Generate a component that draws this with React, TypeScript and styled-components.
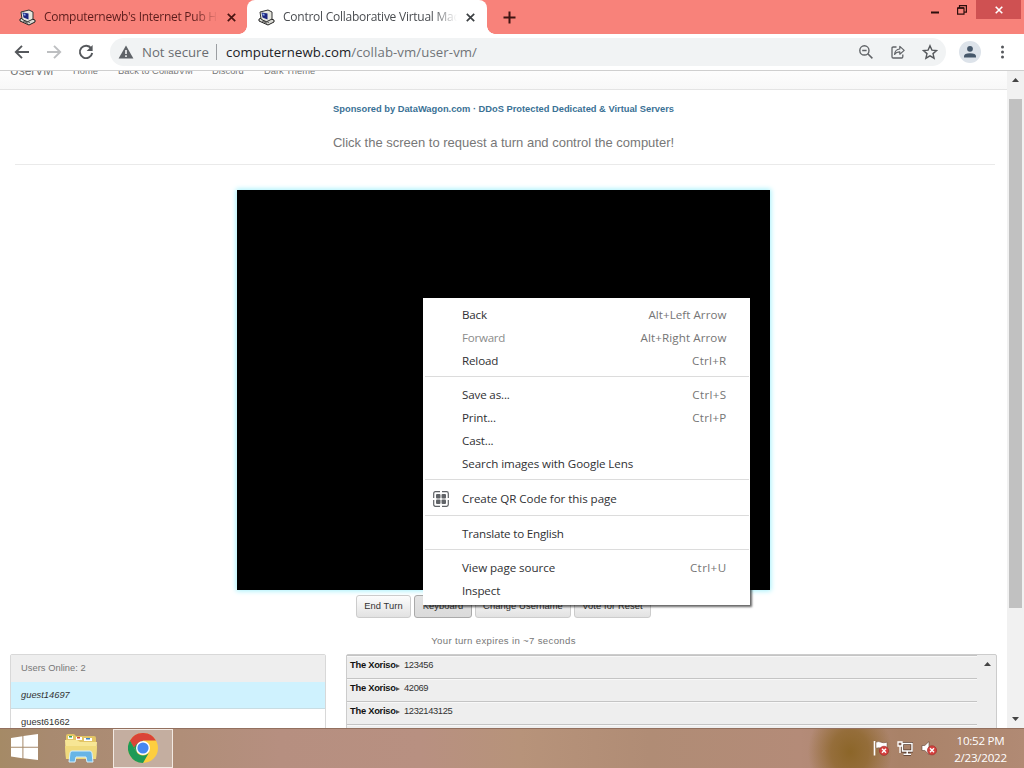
import React from 'react';
import styled, { createGlobalStyle } from 'styled-components';

const Global = createGlobalStyle`
  * { box-sizing: border-box; }
  body { margin: 0; overflow: hidden; background: #fff; }
  svg { display: block; flex: none; }
`;

const UI = `'Open Sans', 'Noto Sans', sans-serif`;
const WEB = `'Liberation Sans', Arial, sans-serif`;

const Screen = styled.div`
  position: relative;
  width: 1024px;
  height: 768px;
  display: flex;
  flex-direction: column;
  overflow: hidden;
  font-family: ${UI};
`;

const TabStrip = styled.div`
  display: flex;
  height: 34px;
  background: #f8827a;
`;
const Tab = styled.div<{ $active?: boolean }>`
  position: relative;
  display: flex;
  align-items: center;
  width: ${p => (p.$active ? 240 : 247)}px;
  padding-left: ${p => (p.$active ? 11 : 19)}px;
  background: ${p => (p.$active ? '#fff' : 'transparent')};
  color: ${p => (p.$active ? '#4a4d51' : '#5c1d1c')};
  border-radius: 8px 8px 0 0;
  &::before, &::after {
    content: '';
    display: ${p => (p.$active ? 'block' : 'none')};
    position: absolute;
    bottom: 0;
    width: 8px;
    height: 8px;
  }
  &::before { left: -8px; background: radial-gradient(circle at 0 0, #f8827a 7.5px, #fff 8px); }
  &::after { right: -8px; background: radial-gradient(circle at 100% 0, #f8827a 7.5px, #fff 8px); }
`;
const TabTitle = styled.span<{ $ls: number }>`
  width: 174px;
  margin: 0 9px 0 8px;
  overflow: hidden;
  white-space: nowrap;
  font-size: 12px;
  line-height: 18px;
  letter-spacing: ${p => p.$ls}px;
  mask-image: linear-gradient(90deg, #000 150px, transparent 174px);
`;
const NewTab = styled.div`
  display: flex;
  align-items: center;
  padding-left: 15.5px;
  flex: 1;
`;
const WindowButtons = styled.div`
  display: flex;
  align-items: flex-start;
`;
const WindowButton = styled.div<{ $w: number; $close?: boolean }>`
  width: ${p => p.$w}px;
  height: 19px;
  display: flex;
  align-items: center;
  justify-content: center;
  background: ${p => (p.$close ? '#cf5152' : 'transparent')};
  margin-right: ${p => (p.$close ? 3 : 0)}px;
`;

const Toolbar = styled.div`
  display: flex;
  align-items: center;
  height: 37px;
  padding-left: 14px;
  background: #fff;
  border-bottom: 1px solid #cfcfcf;
`;
const NavButtons = styled.div`
  display: flex;
  gap: 16px;
  width: 96px;
`;
const Omnibox = styled.div`
  display: flex;
  align-items: center;
  width: 836px;
  height: 28px;
  padding-left: 8px;
  border-radius: 14px;
  background: #f1f3f4;
  font-size: 13.2px;
  line-height: 20px;
  white-space: nowrap;
`;
const Security = styled.span`
  margin-left: 8px;
  width: 74px;
  color: #6a6d71;
`;
const Divider = styled.i`
  width: 1px;
  height: 16px;
  margin-right: 9px;
  background: #9b9ea2;
`;
const Url = styled.span`
  flex: 1;
  letter-spacing: 0.09px;
  color: #707378;
  b { font-weight: 400; color: #202124; }
`;
const OmniIcons = styled.div`
  display: flex;
  gap: 16px;
  margin-right: 8px;
`;
const Avatar = styled.div`
  display: flex;
  align-items: center;
  justify-content: center;
  width: 22px;
  height: 22px;
  margin: 0 13px 0 13px;
  border-radius: 50%;
  background: #dde3ea;
`;

const Viewport = styled.div`
  display: flex;
  height: 657px;
  overflow: hidden;
`;
const Page = styled.main`
  width: 1007px;
  display: flex;
  flex-direction: column;
  font-family: ${WEB};
  background: #fff;
  > * { flex-shrink: 0; }
`;
const SiteNav = styled.nav`
  display: flex;
  align-items: flex-start;
  height: 19px;
  padding-left: 10px;
  border-bottom: 1px solid #e4e4e4;
  background: linear-gradient(#fdfdfd, #f8f8f8);
  overflow: hidden;
`;
const NavLink = styled.span<{ $w: number; $brand?: boolean; $ls?: number }>`
  width: ${p => p.$w}px;
  flex: none;
  margin-top: -6px;
  white-space: nowrap;
  font-size: ${p => (p.$brand ? 12 : 9.33)}px;
  line-height: 13px;
  letter-spacing: ${p => p.$ls ?? 0}px;
  color: #777;
`;
const Sponsor = styled.a`
  margin-top: 12px;
  height: 14px;
  text-align: center;
  font-size: 9.33px;
  line-height: 14px;
  font-weight: 700;
  letter-spacing: -0.01px;
  white-space: nowrap;
  color: #3a7195;
`;
const Lead = styled.p`
  margin: 18px 12px 0 15px;
  padding-right: 3px;
  height: 31px;
  text-align: center;
  font-size: 13px;
  line-height: 18px;
  letter-spacing: -0.01px;
  color: #777;
  border-bottom: 1px solid #eaeaea;
`;
const Display = styled.div`
  width: 533px;
  height: 400px;
  margin: 25px 0 0 237px;
  background: #000;
  box-shadow: 0 0 5px 1px #a5f0fb;
`;
const Buttons = styled.div`
  display: flex;
  gap: 3px;
  margin: 5px 0 0 356px;
  height: 23px;
`;
const Button = styled.button<{ $w: number; $pressed?: boolean }>`
  width: ${p => p.$w}px;
  height: 23px;
  padding: 0 0 1px;
  border: 1px solid ${p => (p.$pressed ? '#aaa' : '#ccc')};
  border-radius: 3px;
  background: ${p => (p.$pressed ? 'linear-gradient(#e4e4e4, #dadada)' : 'linear-gradient(#fdfdfd, #e2e2e2)')};
  font: 9.33px ${WEB};
  letter-spacing: 0.1px;
  color: #333;
  white-space: nowrap;
`;
const TurnStatus = styled.p`
  margin: 16px 0 0;
  height: 14px;
  text-align: center;
  font-size: 9.6px;
  line-height: 14px;
  letter-spacing: 0.33px;
  color: #777;
`;
const Columns = styled.div`
  display: flex;
  gap: 20px;
  margin: 6px 10px 0;
  height: 90px;
`;
const UserList = styled.div`
  width: 316px;
  flex: none;
  border: 1px solid #d8d8d8;
  border-radius: 2px 2px 0 0;
`;
const UserRow = styled.div<{ $kind?: 'head' | 'active' }>`
  height: 27px;
  padding-left: 10px;
  font-size: 9.33px;
  line-height: 26px;
  letter-spacing: ${p => (p.$kind === 'head' ? 0.03 : 0)}px;
  color: ${p => (p.$kind === 'head' ? '#777' : '#333')};
  font-style: ${p => (p.$kind === 'active' ? 'italic' : 'normal')};
  background: ${p => (p.$kind === 'head' ? '#eee' : p.$kind === 'active' ? '#cff2fe' : '#fff')};
  border-bottom: ${p => (p.$kind === 'active' ? '1px solid #c9dde3' : '0')};
`;
const Chat = styled.div`
  display: flex;
  width: 651px;
  border: 1px solid #ccc;
  border-radius: 2px 2px 0 0;
  background: #eee;
`;
const Messages = styled.div`
  width: 630px;
`;
const Message = styled.div`
  display: flex;
  height: 23px;
  padding-left: 3px;
  border-top: 1px solid #c4c4c4;
  box-shadow: inset 0 1px #f8f8f8;
  font-size: 9.33px;
  line-height: 19px;
  letter-spacing: -0.35px;
  color: #333;
  white-space: nowrap;
`;
const Author = styled.b`
  width: 46px;
  letter-spacing: -0.25px;
  color: #111;
`;
const Marker = styled.span`
  display: flex;
  align-items: center;
  width: 8px;
  height: 19px;
`;
const ChatScroll = styled.div`
  flex: 1;
  padding: 7px 0 0 7px;
`;
const ScrollBar = styled.div`
  display: flex;
  flex-direction: column;
  align-items: center;
  justify-content: space-between;
  width: 17px;
  padding: 7px 0 7px;
  background: #f1f1f1;
`;
const Thumb = styled.div`
  width: 13px;
  height: 509px;
  margin: 17px 0 auto;
  background: #c1c1c1;
`;

const Menu = styled.div`
  position: absolute;
  left: 423px;
  top: 298px;
  width: 327px;
  height: 307px;
  padding-top: 5px;
  background: #fff;
  box-shadow: 2px 2px 2px rgba(0, 0, 0, 0.6);
`;
const MenuRow = styled.div<{ $disabled?: boolean }>`
  display: flex;
  align-items: center;
  height: 23px;
  padding: 0 23.5px 0 10px;
  font-size: 11.6px;
  line-height: 23px;
  white-space: nowrap;
  color: ${p => (p.$disabled ? '#8b8b8b' : '#303134')};
`;
const MenuIcon = styled.span`
  width: 29px;
`;
const MenuLabel = styled.span<{ $ls: number }>`
  flex: 1;
  letter-spacing: ${p => p.$ls}px;
`;
const Shortcut = styled.span<{ $ls: number }>`
  letter-spacing: ${p => p.$ls}px;
  color: #757575;
`;
const MenuLine = styled.div<{ $before: number; $after: number }>`
  height: 1px;
  margin: ${p => p.$before}px 1px ${p => p.$after}px 2px;
  background: #dcdcdc;
`;

const Taskbar = styled.div`
  display: flex;
  height: 40px;
  box-shadow: inset 0 1px #93705f;
  background:
    radial-gradient(ellipse 42px 48px at 850px 24px, rgba(138, 100, 37, 0.95) 0%, rgba(140, 101, 40, 0.75) 45%, rgba(160, 116, 80, 0) 100%),
    linear-gradient(90deg, #a58a66 0, #a88a70 50px, #b08e78 180px, #b68f80 280px, #b89081 420px, #b7937a 520px, #b08c75 650px, #b48b78 800px, #a98268 900px, #b18a74 1024px);
`;
const TaskItem = styled.div<{ $w: number; $active?: boolean }>`
  display: flex;
  align-items: center;
  justify-content: center;
  width: ${p => p.$w}px;
  height: 39px;
  margin-top: ${p => (p.$active ? 1 : 0)}px;
  padding-bottom: ${p => (p.$active ? 1 : 0)}px;
  border: ${p => (p.$active ? '1px solid #f2e9e2' : '0')};
  background: ${p => (p.$active ? '#c4aea0' : 'transparent')};
`;
const Tray = styled.div`
  display: flex;
  gap: 8px;
  align-items: center;
  margin-left: auto;
`;
const Clock = styled.div`
  width: 87px;
  padding-top: 4px;
  text-align: center;
  font-size: 11.6px;
  line-height: 17px;
  letter-spacing: -0.25px;
  color: #fff;
`;

const PcIcon = () => (
  <svg width="17" height="17" viewBox="0 0 17 17">
    <path d="M1 10l6-2 9 3v2l-6 3-9-4z" fill="#d8d8d2" stroke="#222" strokeWidth="1" />
    <path d="M2 3l8-2 4 2v7l-6 3-5-3z" fill="#e6e6de" stroke="#333" strokeWidth="1" />
    <path d="M3.5 3.5l6 1v6l-5-2z" fill="#1c2580" />
    <path d="M4.5 4.5l2 .3v2l-2-.5z" fill="#8fb0f0" />
    <path d="M4 12l5 2.4M6 11.6l5 2" stroke="#444" strokeWidth=".8" />
  </svg>
);
const Cross = ({ size = 9, color = '#3c4043', w = 1.7 }: { size?: number; color?: string; w?: number }) => (
  <svg width={size} height={size} viewBox="0 0 9 9">
    <path d="M.8.8l7.4 7.4M8.2.8L.8 8.2" stroke={color} strokeWidth={w} />
  </svg>
);
const Arrow = ({ flip, color }: { flip?: boolean; color: string }) => (
  <svg width="16" height="16" viewBox="0 0 16 16">
    <path
      d={flip ? 'M1 8h13M8 1.8L14.2 8 8 14.2' : 'M15 8H2M8 1.8L1.8 8 8 14.2'}
      fill="none"
      stroke={color}
      strokeWidth="1.9"
    />
  </svg>
);
const Triangle = ({ down }: { down?: boolean }) => (
  <svg width="7" height="4" viewBox="0 0 7 4">
    <path d={down ? 'M0 0h7L3.5 4z' : 'M0 4h7L3.5 0z'} fill="#444" />
  </svg>
);
const QrIcon = () => (
  <svg width="16" height="16" viewBox="0 0 16 16">
    <path
      d="M.7 7V2.4Q.7.7 2.4.7H7M9 .7h4.6q1.700 0 1.700 1.700V7M15.3 9v4.6q0 1.700-1.700 1.700H9M7 15.3H2.4q-1.700 0-1.700-1.700V9"
      fill="none"
      stroke="#606367"
      strokeWidth="1.2"
    />
    <g fill="#606367">
      <rect x="3" y="3" width="4.500" height="4.500" rx="1" />
      <rect x="8.500" y="3" width="4.500" height="4.500" rx="1" />
      <rect x="3" y="8.500" width="4.500" height="4.500" rx="1" />
      <rect x="8.500" y="8.500" width="4.500" height="4.500" rx="1" />
    </g>
  </svg>
);
const RedBadge = ({ x, y }: { x: number; y: number }) => (
  <g>
    <circle cx={x} cy={y} r="4.6" fill="#d5413f" stroke="#9a2c28" strokeWidth=".6" />
    <path d={`M${x - 2} ${y - 2}l4 4m0-4l-4 4`} stroke="#fff" strokeWidth="1.4" />
  </g>
);

type Item = { label: string; ls: number; keys?: string; kls?: number; disabled?: boolean; qr?: boolean };
const groups: { before: number; after: number; items: Item[] }[] = [
  {
    before: 0, after: 0,
    items: [
      { label: 'Back', ls: -0.2, keys: 'Alt+Left Arrow', kls: 0.05 },
      { label: 'Forward', ls: -0.25, keys: 'Alt+Right Arrow', kls: 0.1, disabled: true },
      { label: 'Reload', ls: -0.15, keys: 'Ctrl+R', kls: 0.25 },
    ],
  },
  {
    before: 4, after: 6,
    items: [
      { label: 'Save as...', ls: -0.15, keys: 'Ctrl+S', kls: 0.35 },
      { label: 'Print...', ls: -0.15, keys: 'Ctrl+P', kls: 0.25 },
      { label: 'Cast...', ls: -0.15 },
      { label: 'Search images with Google Lens', ls: -0.08 },
    ],
  },
  { before: 4, after: 7, items: [{ label: 'Create QR Code for this page', ls: -0.06, qr: true }] },
  { before: 5, after: 6, items: [{ label: 'Translate to English', ls: -0.2 }] },
  {
    before: 4, after: 6,
    items: [
      { label: 'View page source', ls: -0.06, keys: 'Ctrl+U', kls: 0.4 },
      { label: 'Inspect', ls: -0.15 },
    ],
  },
];

const ContextMenu = () => (
  <Menu>
    {groups.map((g, i) => (
      <React.Fragment key={i}>
        {i > 0 && <MenuLine $before={g.before} $after={g.after} />}
        {g.items.map(it => (
          <MenuRow key={it.label} $disabled={it.disabled}>
            <MenuIcon>{it.qr && <QrIcon />}</MenuIcon>
            <MenuLabel $ls={it.ls}>{it.label}</MenuLabel>
            {it.keys && <Shortcut $ls={it.kls ?? 0}>{it.keys}</Shortcut>}
          </MenuRow>
        ))}
      </React.Fragment>
    ))}
  </Menu>
);

export default function App() {
  return (
    <Screen>
      <Global />
      <TabStrip>
        <Tab>
          <PcIcon />
          <TabTitle $ls={-0.27}>Computernewb's Internet Pub Ho</TabTitle>
          <Cross color="#4a1512" />
        </Tab>
        <Tab $active>
          <PcIcon />
          <TabTitle $ls={-0.25}>Control Collaborative Virtual Mac</TabTitle>
          <Cross />
        </Tab>
        <NewTab>
          <svg width="13" height="13" viewBox="0 0 13 13">
            <path d="M6.5.5v12M.5 6.5h12" stroke="#3f1512" strokeWidth="2" />
          </svg>
        </NewTab>
        <WindowButtons>
          <WindowButton $w={27}>
            <svg width="8" height="10" viewBox="0 0 8 10"><path d="M0 7.5h8" stroke="#2d0f0d" strokeWidth="2" /></svg>
          </WindowButton>
          <WindowButton $w={28}>
            <svg width="10" height="10" viewBox="0 0 10 10">
              <path d="M.6 3h6.4v6.2H.6zM2.5 3V.6h6.9v6.6H7" fill="none" stroke="#2d0f0d" strokeWidth="1.2" />
              <path d="M.6 3h6.4" stroke="#2d0f0d" strokeWidth="1.6" />
            </svg>
          </WindowButton>
          <WindowButton $w={45} $close><Cross size={8} color="#fff" w={1.8} /></WindowButton>
        </WindowButtons>
      </TabStrip>

      <Toolbar>
        <NavButtons>
          <Arrow color="#55585c" />
          <Arrow flip color="#bdbfc1" />
          <svg width="16" height="16" viewBox="0 0 16 16">
            <path d="M13.2 4.4A6.2 6.2 0 1 0 14.2 9" fill="none" stroke="#55585c" strokeWidth="1.9" />
            <path d="M14.6 1v6H8.6z" fill="#55585c" />
          </svg>
        </NavButtons>
        <Omnibox>
          <svg width="16" height="14" viewBox="0 0 16 14">
            <path d="M8 .6L15.4 13.4H.6z" fill="#5f6368" />
            <path d="M8 5v4M8 10.3v1.6" stroke="#fff" strokeWidth="1.5" />
          </svg>
          <Security>Not secure</Security>
          <Divider />
          <Url><b>computernewb.com</b>/collab-vm/user-vm/</Url>
          <OmniIcons>
            <svg width="16" height="16" viewBox="0 0 16 16">
              <circle cx="6.4" cy="6.4" r="4.6" fill="none" stroke="#606367" strokeWidth="1.4" />
              <path d="M9.8 9.8l4.6 4.6M4.2 6.4h4.4" stroke="#606367" strokeWidth="1.5" />
            </svg>
            <svg width="16" height="16" viewBox="0 0 16 16">
              <path d="M6.5 3H3.2Q2 3 2 4.2v8.6Q2 14 3.2 14h8.4q1.2 0 1.2-1.2v-2.3" fill="none" stroke="#606367" strokeWidth="1.3" />
              <path d="M4.6 10.4Q5 5.3 9.8 5V2.4L14.2 6.4 9.8 10.2V7.8Q6.4 7.6 4.6 10.4z" fill="none" stroke="#606367" strokeWidth="1.2" strokeLinejoin="round" />
            </svg>
            <svg width="16" height="16" viewBox="0 0 16 16">
              <path d="M8 1.8l1.9 4.3 4.7.4-3.6 3.1 1.1 4.6L8 11.8l-4.1 2.4L5 9.6 1.4 6.5l4.7-.4z" fill="none" stroke="#55585c" strokeWidth="1.4" />
            </svg>
          </OmniIcons>
        </Omnibox>
        <Avatar>
          <svg width="14" height="14" viewBox="0 0 14 14" fill="#46586b">
            <circle cx="7" cy="3.8" r="2.9" />
            <path d="M1 12.6v-1.3Q1 8.2 7 8.2t6 3.1v1.3z" />
          </svg>
        </Avatar>
        <svg width="16" height="16" viewBox="0 0 16 16" fill="#55585c">
          <circle cx="8.5" cy="3" r="1.5" /><circle cx="8.5" cy="8" r="1.5" /><circle cx="8.5" cy="13" r="1.5" />
        </svg>
      </Toolbar>

      <Viewport>
        <Page>
          <SiteNav>
            <NavLink $w={63} $brand>UserVM</NavLink>
            <NavLink $w={45}>Home</NavLink>
            <NavLink $w={94} $ls={0.05}>Back to CollabVM</NavLink>
            <NavLink $w={52}>Discord</NavLink>
            <NavLink $w={60}>Dark Theme</NavLink>
          </SiteNav>
          <Sponsor>Sponsored by DataWagon.com · DDoS Protected Dedicated &amp; Virtual Servers</Sponsor>
          <Lead>Click the screen to request a turn and control the computer!</Lead>
          <Display />
          <Buttons>
            <Button $w={55}>End Turn</Button>
            <Button $w={58} $pressed>Keyboard</Button>
            <Button $w={96}>Change Username</Button>
            <Button $w={77}>Vote for Reset</Button>
          </Buttons>
          <TurnStatus>Your turn expires in ~7 seconds</TurnStatus>
          <Columns>
            <UserList>
              <UserRow $kind="head">Users Online: 2</UserRow>
              <UserRow $kind="active">guest14697</UserRow>
              <UserRow>guest61662</UserRow>
            </UserList>
            <Chat>
              <Messages>
                {['123456', '42069', '1232143125', ''].map(m => (
                  <Message key={m}>
                    {m && (
                      <>
                        <Author>The Xoriso</Author>
                        <Marker>
                          <svg width="4" height="4" viewBox="0 0 4 4"><path d="M0 0l4 2-4 2z" fill="#555" /></svg>
                        </Marker>
                        {m}
                      </>
                    )}
                  </Message>
                ))}
              </Messages>
              <ChatScroll><Triangle /></ChatScroll>
            </Chat>
          </Columns>
        </Page>
        <ScrollBar>
          <Triangle />
          <Thumb />
          <Triangle down />
        </ScrollBar>
      </Viewport>

      <Taskbar>
        <TaskItem $w={48}>
          <svg width="27" height="27" viewBox="0 0 27 27" fill="#fff">
            <path d="M0 4l11.4-1.8v10.6H0zM12.4 2L27 0v12.8H12.4zM0 13.8h11.4v10.4L0 22.6zM12.4 13.8H27V26l-14.600-1.8z" />
          </svg>
        </TaskItem>
        <TaskItem $w={65}>
          <svg width="34" height="30" viewBox="0 0 34 30">
            <path d="M2 3q0-2 2-2h6l2 2h18q2 0 2 2v20H2z" fill="#e3c565" />
            <path d="M4 3h5v3H4zM12 4h6v3h-6zM20 5h8v3h-8z" fill="#fff" />
            <path d="M5 3h3v1.5H5z" fill="#3da05a" /><path d="M13 4h3v1.5h-3z" fill="#cf4a3c" /><path d="M22 5h4v1.5h-4z" fill="#3e84c4" />
            <path d="M1 7h12l3 2h17l-1 17H2z" fill="#f7e695" />
            <path d="M1 13h32l-1 13H2z" fill="#f0da7c" />
            <path d="M5 29l1-9q.3-2 2-2h18q1.700 0 2 2l1 9h-6l-1-5H12l-1 5z" fill="#68b5e6" stroke="#d7f0fc" strokeWidth="1" />
          </svg>
        </TaskItem>
        <TaskItem $w={60} $active>
          <svg width="30" height="30" viewBox="0 0 30 30">
            <circle cx="15" cy="15" r="15" fill="#fdce3f" />
            <path d="M2 7.5A15 15 0 0 0 15 30L21.5 18.75A7.5 7.5 0 0 1 8.5 18.75z" fill="#1d9a57" />
            <path d="M2 7.5L8.5 18.75 15 15V7.5z" fill="#1d9a57" />
            <path d="M2 7.5A15 15 0 0 1 28 7.5H15L8.5 11.25 6 14.4z" fill="#da4437" />
            <circle cx="15" cy="15" r="7" fill="#fff" />
            <circle cx="15" cy="15" r="5.6" fill="#4587f0" />
          </svg>
        </TaskItem>
        <Tray>
          <svg width="16" height="16" viewBox="0 0 16 16">
            <path d="M1.5 1v14.5" stroke="#fff" strokeWidth="1.6" />
            <path d="M3 2.2q2.5-1.2 5 0t6 0v6q-3 1-5.5 0T3 8.2z" fill="#fff" stroke="#6a4a3a" strokeWidth=".5" />
            <RedBadge x={11} y={10.8} />
          </svg>
          <svg width="16" height="16" viewBox="0 0 16 16">
            <path d="M5.5 3.5H15v7.5H5.5zM10.2 11v3M6.5 14.3h7.5" fill="none" stroke="#55382a" strokeWidth="3" />
            <path d="M5.5 3.5H15v7.5H5.5zM10.2 11v3M6.5 14.3h7.5" fill="none" stroke="#fff" strokeWidth="1.5" />
            <path d="M1 2h4v4H1zM3 6v7" fill="#856252" stroke="#fff" strokeWidth="1.3" />
          </svg>
          <svg width="16" height="16" viewBox="0 0 16 16">
            <path d="M1 5.5h2.800L8 1.5v13l-4.200-4H1z" fill="#fff" stroke="#5d4033" strokeWidth=".6" />
            <RedBadge x={11} y={10.3} />
          </svg>
        </Tray>
        <Clock>10:52 PM<br />2/23/2022</Clock>
      </Taskbar>
      <ContextMenu />
    </Screen>
  );
}
